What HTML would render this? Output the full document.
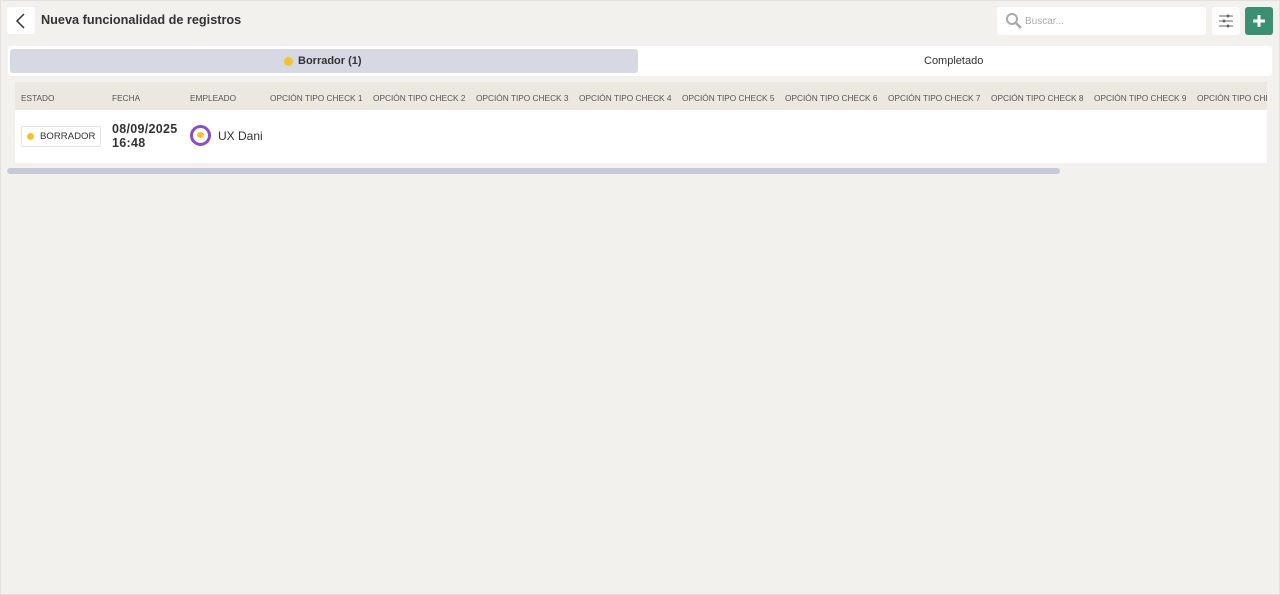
<!DOCTYPE html>
<html><head><meta charset="utf-8"><style>
*{margin:0;padding:0;box-sizing:border-box}
body{width:1280px;height:595px;background:#f2f1ee;font-family:"Liberation Sans",sans-serif;position:relative;overflow:hidden;box-shadow:inset 0 0 0 1px #e2e1de}
.abs{position:absolute}
.hd{font-size:8.3px;color:#555;top:93px;white-space:nowrap}
</style></head><body>
<div class="abs" style="left:7px;top:7px;width:28px;height:27px;background:#fff;border-radius:3px"></div>
<svg class="abs" style="left:14px;top:12px" width="14" height="18"><path d="M10 2 L3 9 L10 16" stroke="#333" stroke-width="1.5" fill="none"/></svg>
<div class="abs" style="left:41px;top:13px;font-size:12.7px;font-weight:bold;color:#333">Nueva funcionalidad de registros</div>
<div class="abs" style="left:997px;top:7px;width:209px;height:28px;background:#fff;border-radius:3px"></div>
<svg class="abs" style="left:1004px;top:12px" width="20" height="18"><circle cx="8" cy="7" r="5" stroke="#aaa" stroke-width="2" fill="none"/><path d="M12 11 L17 16" stroke="#aaa" stroke-width="2.5"/></svg>
<div class="abs" style="left:1025px;top:16px;font-size:10px;color:#aaa">Buscar...</div>
<div class="abs" style="left:1212px;top:7px;width:28px;height:28px;background:#fff;border-radius:3px"></div>
<svg class="abs" style="left:1218px;top:13px" width="16" height="16"><path d="M1 3h14M1 8h14M1 13h14" stroke="#666" stroke-width="1"/><circle cx="10" cy="3" r="1.5" fill="#666"/><circle cx="6" cy="8" r="1.5" fill="#666"/><circle cx="10" cy="13" r="1.5" fill="#666"/></svg>
<div class="abs" style="left:1245px;top:7px;width:28px;height:28px;background:#3b8f72;border-radius:3px"></div>
<svg class="abs" style="left:1251px;top:13px" width="16" height="16"><path d="M8 2v12M2 8h12" stroke="#fff" stroke-width="3"/></svg>
<div class="abs" style="left:8px;top:46px;width:1264px;height:30px;background:#fff;border-radius:3px"></div>
<div class="abs" style="left:10px;top:49px;width:628px;height:24px;background:#d6d9e3;border-radius:3px"></div>
<div class="abs" style="left:284px;top:57px;width:9px;height:9px;border-radius:50%;background:#f2c230"></div>
<div class="abs" style="left:298px;top:55px;font-size:11px;font-weight:bold;color:#333">Borrador (1)</div>
<div class="abs" style="left:924px;top:55px;font-size:11px;color:#333">Completado</div>
<div class="abs" style="left:15px;top:82px;width:1252px;height:28px;background:#ede8df"></div>
<div class="abs hd" style="left:21px">ESTADO</div>
<div class="abs hd" style="left:112px">FECHA</div>
<div class="abs hd" style="left:190px">EMPLEADO</div>
<div class="abs hd" style="left:270px">OPCIÓN TIPO CHECK 1</div>
<div class="abs hd" style="left:373px">OPCIÓN TIPO CHECK 2</div>
<div class="abs hd" style="left:476px">OPCIÓN TIPO CHECK 3</div>
<div class="abs hd" style="left:579px">OPCIÓN TIPO CHECK 4</div>
<div class="abs hd" style="left:682px">OPCIÓN TIPO CHECK 5</div>
<div class="abs hd" style="left:785px">OPCIÓN TIPO CHECK 6</div>
<div class="abs hd" style="left:888px">OPCIÓN TIPO CHECK 7</div>
<div class="abs hd" style="left:991px">OPCIÓN TIPO CHECK 8</div>
<div class="abs hd" style="left:1094px">OPCIÓN TIPO CHECK 9</div>
<div class="abs hd" style="left:1197px;width:70px;overflow:hidden">OPCIÓN TIPO CHECK 10</div>
<div class="abs" style="left:15px;top:110px;width:1252px;height:53px;background:#fff"></div>
<div class="abs" style="left:21px;top:126px;width:80px;height:21px;border:1px solid #e4e4e4;border-radius:2px"></div>
<div class="abs" style="left:27px;top:133px;width:7px;height:7px;border-radius:50%;background:#f2c230"></div>
<div class="abs" style="left:40px;top:131px;font-size:9.6px;color:#333">BORRADOR</div>
<div class="abs" style="left:112px;top:122px;font-size:12.5px;font-weight:bold;color:#333;line-height:14px;letter-spacing:0.3px">08/09/2025<br>16:48</div>
<div class="abs" style="left:190px;top:125px;width:21px;height:21px;border-radius:50%;border:3px solid #8a4fc0;background:#fff"></div>
<div class="abs" style="left:197px;top:132px;width:7px;height:6px;border-radius:50%;background:#f2c230"></div>
<div class="abs" style="left:218px;top:129px;font-size:12px;color:#333">UX Dani</div>
<div class="abs" style="left:7px;top:168px;width:1053px;height:6px;background:#c6cad8;border-radius:3px"></div>
</body></html>
